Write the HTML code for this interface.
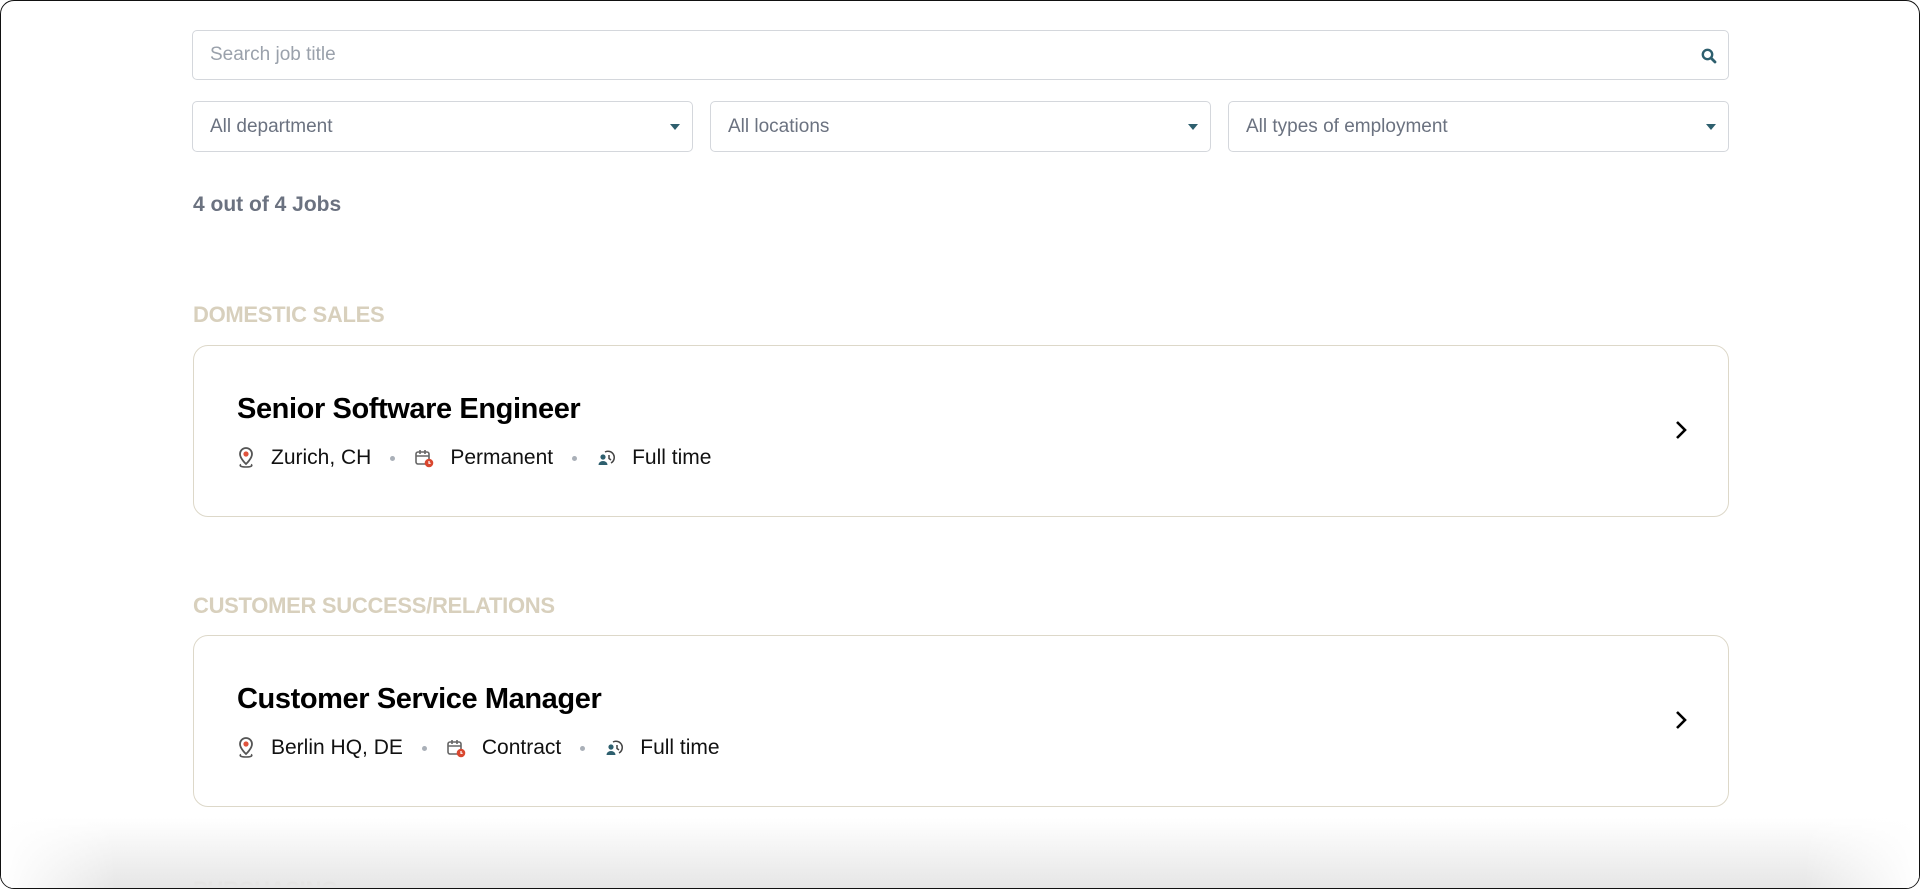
<!DOCTYPE html>
<html><head><meta charset="utf-8"><style>
*{box-sizing:border-box;margin:0;padding:0}
html,body{width:1920px;height:889px;overflow:hidden;background:#fff;font-family:"Liberation Sans",Arial,sans-serif}
.frame{position:absolute;left:0;top:0;width:1920px;height:889px;border:1.5px solid #111;border-radius:14px;overflow:hidden;background:#fff}
.box{position:absolute;border:1px solid #d4d7dc;border-radius:5px;background:#fff;color:#6b7280;font-size:19px;padding-left:17px;display:flex;align-items:center}
.search{left:191px;top:29px;width:1537px;height:50px;color:#9aa1ab}
.sel{top:100px;height:51px;width:501px}
.caret{position:absolute;right:12px;top:22px;width:0;height:0;border-left:5.5px solid transparent;border-right:5.5px solid transparent;border-top:6px solid #2e5f6e}
.count{position:absolute;left:192px;top:192px;font-size:21px;font-weight:bold;color:#6b7280}
.sec{position:absolute;left:192px;font-size:22px;font-weight:bold;color:#d8d0bd;letter-spacing:-0.3px}
.card{position:absolute;z-index:2;left:192px;width:1536px;height:172px;border:1.5px solid #ddd8c9;border-radius:15px;background:#fff}
.title{position:absolute;left:43px;top:47px;font-size:29px;font-weight:bold;color:#000;letter-spacing:-0.4px}
.meta{position:absolute;left:43px;top:97px;height:30px;display:flex;align-items:center;font-size:21px;color:#111}
.meta svg{margin-right:16px}
.dot{width:5px;height:5px;border-radius:50%;background:#aab0b8;margin:0 19px}
.chev{position:absolute;right:40px;top:73px}
.fade{position:absolute;z-index:1;left:0;right:0;bottom:0;height:70px;background:linear-gradient(rgba(255,255,255,0),#e6e6e6)}
.fade:after{content:"";position:absolute;inset:0;background:linear-gradient(90deg,#fff,rgba(255,255,255,0) 6%,rgba(255,255,255,0) 94%,#fff)}
</style></head><body><div class="frame">
<div class="box search">Search job title
<svg style="position:absolute;right:11px;top:17px" width="16" height="16" viewBox="0 0 16 16"><circle cx="6.5" cy="6.5" r="4.7" fill="none" stroke="#2e5f6e" stroke-width="2.4"/><path d="M10 10l4 4" stroke="#2e5f6e" stroke-width="2.8" stroke-linecap="round"/></svg></div>
<div class="box sel" style="left:191px">All department<span class="caret"></span></div>
<div class="box sel" style="left:709px">All locations<span class="caret"></span></div>
<div class="box sel" style="left:1227px">All types of employment<span class="caret"></span></div>
<div class="count">4 out of 4 Jobs</div>

<div class="sec" style="top:301px">DOMESTIC SALES</div>
<div class="card" style="top:344px">
<div class="title">Senior Software Engineer</div>
<div class="meta">
<svg width="18" height="22" viewBox="0 0 18 22"><path d="M9 17s-6-5.5-6-10a6 6 0 0112 0c0 4.5-6 10-6 10z" fill="none" stroke="#555" stroke-width="1.8"/><circle cx="9" cy="7" r="2.6" fill="#e0533d"/><path d="M4 17.5c-1.5.6-1.5 2.5 5 2.5s6.5-1.9 5-2.5" fill="none" stroke="#555" stroke-width="1.6"/></svg>Zurich, CH<span class="dot"></span>
<svg width="20" height="20" viewBox="0 0 20 20"><rect x="2" y="4" width="13" height="12" rx="2" fill="none" stroke="#666" stroke-width="1.6"/><path d="M2 8h13M6 2v4M11 2v4" stroke="#666" stroke-width="1.6"/><circle cx="15" cy="15" r="4.3" fill="#d9472f"/><path d="M15 13v2.3h1.6" stroke="#fff" stroke-width="1.2" fill="none"/></svg>Permanent<span class="dot"></span>
<svg width="20" height="20" viewBox="0 0 20 20"><circle cx="7" cy="9" r="2.6" fill="#2e5f6e"/><path d="M2.5 17a4.5 4 0 019 0z" fill="#2e5f6e"/><path d="M9 4a6 6 0 11 6 11" fill="none" stroke="#444" stroke-width="1.5"/><path d="M13 7v3.5l2 1.5" stroke="#444" stroke-width="1.5" fill="none"/></svg>Full time</div>
<svg class="chev" width="14" height="22" viewBox="0 0 14 22"><path d="M3 3l8 8-8 8" fill="none" stroke="#000" stroke-width="2.6"/></svg>
</div>

<div class="sec" style="top:592px">CUSTOMER SUCCESS/RELATIONS</div>
<div class="card" style="top:634px">
<div class="title">Customer Service Manager</div>
<div class="meta">
<svg width="18" height="22" viewBox="0 0 18 22"><path d="M9 17s-6-5.5-6-10a6 6 0 0112 0c0 4.5-6 10-6 10z" fill="none" stroke="#555" stroke-width="1.8"/><circle cx="9" cy="7" r="2.6" fill="#e0533d"/><path d="M4 17.5c-1.5.6-1.5 2.5 5 2.5s6.5-1.9 5-2.5" fill="none" stroke="#555" stroke-width="1.6"/></svg>Berlin HQ, DE<span class="dot"></span>
<svg width="20" height="20" viewBox="0 0 20 20"><rect x="2" y="4" width="13" height="12" rx="2" fill="none" stroke="#666" stroke-width="1.6"/><path d="M2 8h13M6 2v4M11 2v4" stroke="#666" stroke-width="1.6"/><circle cx="15" cy="15" r="4.3" fill="#d9472f"/><path d="M15 13v2.3h1.6" stroke="#fff" stroke-width="1.2" fill="none"/></svg>Contract<span class="dot"></span>
<svg width="20" height="20" viewBox="0 0 20 20"><circle cx="7" cy="9" r="2.6" fill="#2e5f6e"/><path d="M2.5 17a4.5 4 0 019 0z" fill="#2e5f6e"/><path d="M9 4a6 6 0 11 6 11" fill="none" stroke="#444" stroke-width="1.5"/><path d="M13 7v3.5l2 1.5" stroke="#444" stroke-width="1.5" fill="none"/></svg>Full time</div>
<svg class="chev" width="14" height="22" viewBox="0 0 14 22"><path d="M3 3l8 8-8 8" fill="none" stroke="#000" stroke-width="2.6"/></svg>
</div>
<div class="sec" style="top:876px">PURCHASING</div>
<div class="fade"></div>
</div></body></html>
